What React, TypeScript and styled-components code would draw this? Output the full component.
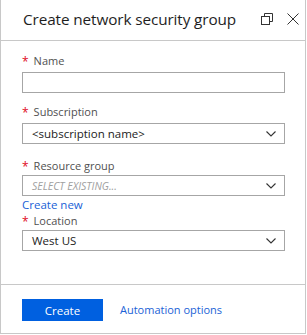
import React from 'react';
import styled, { createGlobalStyle } from 'styled-components';

const GlobalStyle = createGlobalStyle`
  html, body {
    margin: 0;
    padding: 0;
    background: #ffffff;
  }
  * {
    box-sizing: border-box;
  }
`;

const Blade = styled.div`
  width: 306px;
  height: 334px;
  display: flex;
  flex-direction: column;
  border: 1px solid #c8c8c8;
  border-top: none;
  background: #fff;
  font-family: "Open Sans", "Noto Sans", sans-serif;
  color: #333;
`;

const Header = styled.div`
  height: 41px;
  display: flex;
  align-items: center;
  padding: 0 6px 2px 22px;
  border-bottom: 1px solid #c8c8c8;
`;

const Title = styled.h1`
  flex: 1;
  margin: 0;
  font-size: 15.3px;
  font-weight: 400;
  color: #1e1e1e;
  white-space: nowrap;
  letter-spacing: -0.1px;
`;

const IconButton = styled.button<{ $gap?: number }>`
  width: 12px;
  height: 12px;
  padding: 0;
  margin-left: ${(p) => p.$gap ?? 0}px;
  border: none;
  background: none;
  display: flex;
  align-items: center;
  justify-content: center;
`;

const Form = styled.div`
  flex: 1;
  display: flex;
  flex-direction: column;
  padding: 11px 20px 0 21px;
`;

const Field = styled.div<{ $top: number }>`
  display: flex;
  flex-direction: column;
  margin-top: ${(p) => p.$top}px;
`;

const Label = styled.label<{ $gap: number }>`
  display: flex;
  align-items: center;
  height: 16px;
  font-size: 11px;
  color: #505050;
  margin-bottom: ${(p) => p.$gap}px;
`;

const Required = styled.span`
  color: #e00b1c;
  font-size: 12px;
  margin-right: 5px;
  position: relative;
  top: 1px;
`;

const TextBox = styled.div`
  height: 21px;
  border: 1px solid #a6a6a6;
`;

const SelectBox = styled.div`
  height: 21px;
  border: 1px solid #a6a6a6;
  display: flex;
  align-items: center;
  padding: 0 8px 0 9px;
`;

const SelectText = styled.span<{ $placeholder?: boolean }>`
  flex: 1;
  font-size: ${(p) => (p.$placeholder ? 10.5 : 11.5)}px;
  font-style: ${(p) => (p.$placeholder ? 'italic' : 'normal')};
  color: ${(p) => (p.$placeholder ? '#a0a0a0' : '#222')};
  white-space: nowrap;
`;

const Link = styled.a`
  font-size: 11.5px;
  color: #1a62d6;
  text-decoration: none;
  line-height: 16px;
`;

const CreateNew = styled(Link)`
  margin-top: 1px;
`;

const Footer = styled.div`
  height: 49px;
  border-top: 1px solid #c8c8c8;
  display: flex;
  align-items: flex-start;
  padding: 14px 0 0 21px;
  gap: 17px;
`;

const PrimaryButton = styled.button`
  width: 81px;
  height: 22px;
  border: none;
  background: #0060e0;
  color: #fff;
  font-family: inherit;
  font-size: 11.5px;
  padding: 0;
`;

const FooterLink = styled(Link)`
  font-size: 11px;
  line-height: 22px;
`;

const Chevron = () => (
  <svg width="10" height="6" viewBox="0 0 10 6">
    <path d="M0.5 0.5 L5 5 L9.5 0.5" fill="none" stroke="#333" strokeWidth="1.1" />
  </svg>
);

const RestoreIcon = () => (
  <svg width="12" height="12" viewBox="0 0 12 12">
    <rect x="0.5" y="3.5" width="8" height="8" fill="none" stroke="#333" strokeWidth="1" />
    <path d="M3.5 3.5 V0.5 H11.5 V8.5 H8.5" fill="none" stroke="#333" strokeWidth="1" />
  </svg>
);

const CloseIcon = () => (
  <svg width="12" height="12" viewBox="0 0 12 12">
    <path d="M0.5 0.5 L11.5 11.5 M11.5 0.5 L0.5 11.5" fill="none" stroke="#333" strokeWidth="1" />
  </svg>
);

const Select = ({ value, placeholder }: { value: string; placeholder?: boolean }) => (
  <SelectBox>
    <SelectText $placeholder={placeholder}>{value}</SelectText>
    <Chevron />
  </SelectBox>
);

const App = () => (
  <>
    <GlobalStyle />
    <Blade>
      <Header>
        <Title>Create network security group</Title>
        <IconButton aria-label="Restore">
          <RestoreIcon />
        </IconButton>
        <IconButton $gap={14} aria-label="Close">
          <CloseIcon />
        </IconButton>
      </Header>
      <Form>
        <Field $top={0}>
          <Label $gap={4}>
            <Required>*</Required>Name
          </Label>
          <TextBox />
        </Field>
        <Field $top={10}>
          <Label $gap={4}>
            <Required>*</Required>Subscription
          </Label>
          <Select value="<subscription name>" />
        </Field>
        <Field $top={13}>
          <Label $gap={2}>
            <Required>*</Required>Resource group
          </Label>
          <Select value="SELECT EXISTING..." placeholder />
          <CreateNew href="#">Create new</CreateNew>
        </Field>
        <Field $top={-1}>
          <Label $gap={2}>
            <Required>*</Required>Location
          </Label>
          <Select value="West US" />
        </Field>
      </Form>
      <Footer>
        <PrimaryButton>Create</PrimaryButton>
        <FooterLink href="#">Automation options</FooterLink>
      </Footer>
    </Blade>
  </>
);

export default App;
